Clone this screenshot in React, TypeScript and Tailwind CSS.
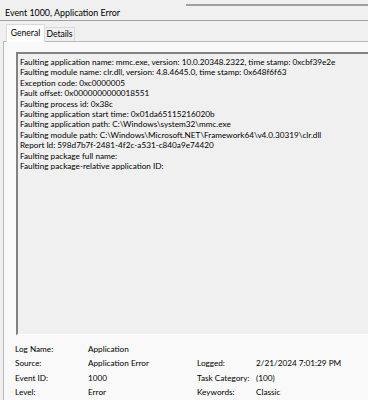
import React from "react";

const lines = [
  "Faulting application name: mmc.exe, version: 10.0.20348.2322, time stamp: 0xcbf39e2e",
  "Faulting module name: clr.dll, version: 4.8.4645.0, time stamp: 0x648f6f63",
  "Exception code: 0xc0000005",
  "Fault offset: 0x0000000000018551",
  "Faulting process id: 0x38c",
  "Faulting application start time: 0x01da65115216020b",
  "Faulting application path: C:\\Windows\\system32\\mmc.exe",
  "Faulting module path: C:\\Windows\\Microsoft.NET\\Framework64\\v4.0.30319\\clr.dll",
  "Report Id: 598d7b7f-2481-4f2c-a531-c840a9e74420",
  "Faulting package full name: ",
  "Faulting package-relative application ID: ",
];

const App = () => {
  return (
    <div
      className="w-[368px] h-[400px] overflow-hidden bg-[#f0f0f0] text-[#000] text-[8.2px] leading-none"
      style={{ fontFamily: 'Lato, "Noto Sans", sans-serif' }}
    >
      {/* top splitter */}
      <div className="h-[6px] flex items-start">
        <div className="w-[186px]" />
        <div className="flex-1 mt-[4px] h-[2px] bg-[#a0a0a0]" />
      </div>

      {/* title */}
      <div className="h-[15px] flex items-center pl-[5px] border-b border-[#a0a0a0] text-[8.9px]">
        Event 1000, Application Error
      </div>

      {/* tabs */}
      <div className="flex h-[20px] items-end pl-[6px] text-[8.6px]">
        <div className="h-[18px] w-[39px] bg-white border border-b-0 border-[#d9d9d9] flex items-center justify-center relative top-[1px]">
          General
        </div>
        <div className="h-[14px] w-[30px] border border-b-0 border-l-0 border-[#d9d9d9] flex items-center justify-center">
          Details
        </div>
      </div>

      {/* tab page */}
      <div className="ml-[3px] border-l border-t border-[#b9b9b9] bg-[#f9f9f9] h-[360px] pt-[10px] pl-[12px]">
        <div className="h-[283px] border-t-2 border-l-2 border-t-[#828282] border-l-[#828282] border-b border-b-white bg-[#f0f0f0] pl-[2px] pt-[3px] -mr-[20px]">
          {lines.map((l, i) => (
            <div key={i} className="h-[10.4px] leading-[10.4px] whitespace-pre">
              {l}
            </div>
          ))}
        </div>

        <div className="mt-[10px] grid grid-cols-[73px_109px_59px_1fr] gap-y-[5px] leading-[9.4px] -ml-[1px]">
          <div>Log Name:</div>
          <div className="col-span-3">Application</div>
          <div>Source:</div>
          <div>Application Error</div>
          <div>Logged:</div>
          <div>2/21/2024 7:01:29 PM</div>
          <div>Event ID:</div>
          <div>1000</div>
          <div>Task Category:</div>
          <div>(100)</div>
          <div>Level:</div>
          <div>Error</div>
          <div>Keywords:</div>
          <div>Classic</div>
        </div>
      </div>
    </div>
  );
};

export default App;
